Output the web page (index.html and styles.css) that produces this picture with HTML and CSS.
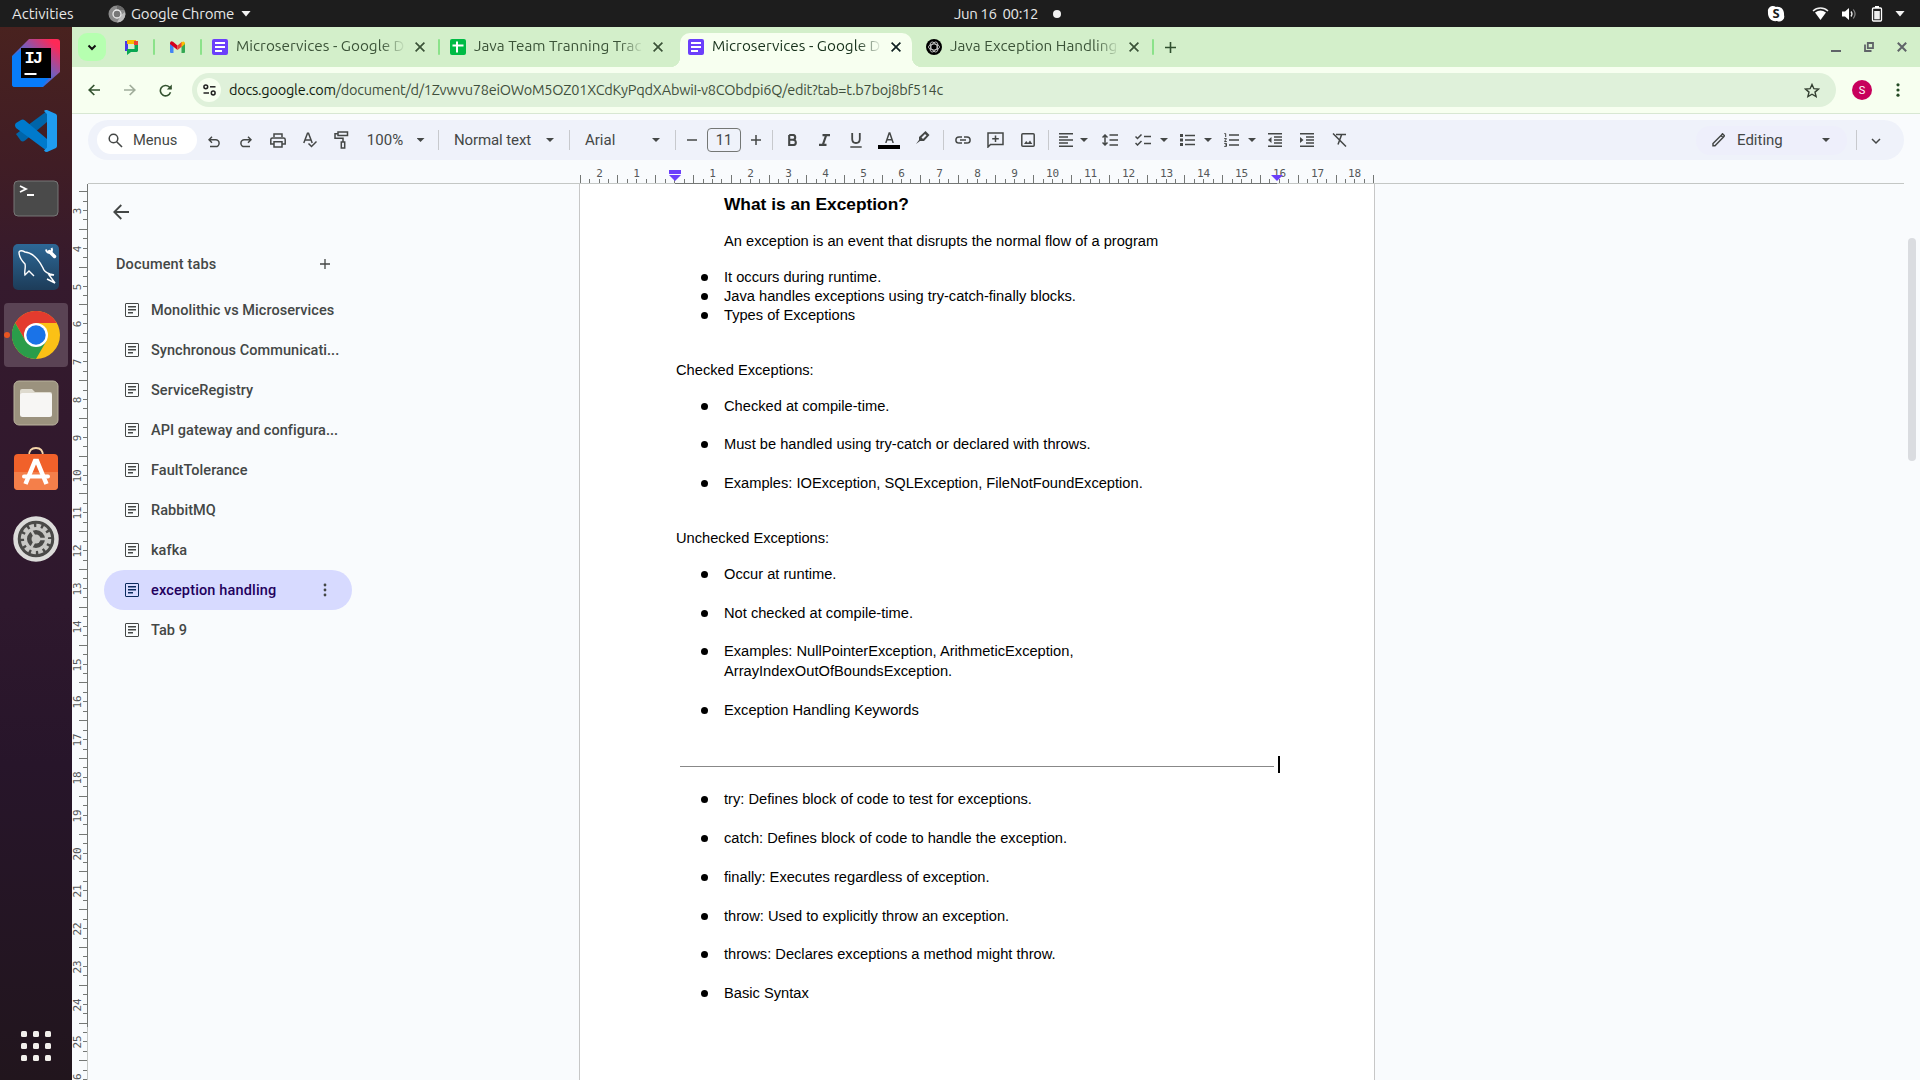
FILE: index.html
```html
<!DOCTYPE html>
<html lang="en">
<head>
<meta charset="utf-8">
<title>Microservices - Google Docs</title>
<link rel="stylesheet" href="styles.css">
</head>
<body>
<header class="panel">
  <span class="activities">Activities</span>
  <svg class="panel-app-icon" width="18" height="18" viewBox="0 0 18 18"><circle cx="9" cy="9" r="8.5" fill="#8b8b8b"/><path d="M9 .5a8.500 8.500 0 0 1 7.500 4.500H9z" fill="#6a6a6a"/><path d="M17 7a8.500 8.500 0 0 1-8 10.500L13 10z" fill="#bcbcbc"/><circle cx="9" cy="9" r="4" fill="#777" stroke="#eee" stroke-width="1.300"/></svg>
  <span class="app-name">Google Chrome</span>
  <i class="caret caret-light"></i>
  <span class="clock">Jun 16&nbsp; 00:12</span>
  <i class="clock-dot"></i>
  <div class="tray">
    <svg width="18" height="18" viewBox="0 0 18 18"><path d="M5 1a5 5 0 0 0-4 6c-.5 5 3 10 9 9a5 5 0 0 0 7-6C17.500 5 14 1 9 2A5 5 0 0 0 5 1z" fill="#fff"/><text x="9" y="13.300" class="skype">S</text></svg>
    <svg class="tray-wifi" width="17" height="15" viewBox="0 0 17 15"><path d="M1 5a11 11 0 0 1 15 0" fill="none" stroke="#eee" stroke-width="1.500"/><path d="M3 6.500a9 9 0 0 1 11 0L8.500 14z" fill="#fff"/></svg>
    <svg class="tray-vol" width="16" height="16" viewBox="0 0 16 16"><path d="M1 5.500h3L8 2v12L4 10.500H1z" fill="#fff"/><path d="M10 5.500q2 2.500 0 5" fill="none" stroke="#eee" stroke-width="1.300"/><path d="M12.300 3.500q3.500 4.500 0 9" fill="none" stroke="#888" stroke-width="1.200"/></svg>
    <svg class="tray-bat" width="12" height="16" viewBox="0 0 12 16"><path d="M4 0h4v2H4z" fill="#fff"/><rect x="1.500" y="2" width="9" height="13" rx="1" fill="none" stroke="#fff" stroke-width="1.300"/><path d="M3.200 5h5.600v8.300H3.200z" fill="#eee"/></svg>
    <i class="caret caret-light"></i>
  </div>
</header>

<div class="desktop">
  <nav class="dock">
    <div class="dock-cell"><svg width="48" height="48" viewBox="0 0 48 48"><defs><linearGradient id="ij" x1="1" y1="0" x2=".3" y2=".75"><stop offset=".15" stop-color="#fe2857"/><stop offset=".6" stop-color="#7b5bb8"/><stop offset="1" stop-color="#087cfa"/></linearGradient></defs><path d="M17 0h28q3 0 3 3v30L31 48H3q-3 0-3-3V17z" fill="url(#ij)"/><path d="M0 18l9-7v28h28l-8 9H3q-3 0-3-3z" fill="#087cfa"/><path d="M9 9h30v30H9z"/><path d="M12.500 35h12" stroke="#fff" stroke-width="2"/><text x="12.500" y="24" class="ij-text">IJ</text></svg></div>
    <div class="dock-cell"><svg width="44" height="44" viewBox="0 0 44 44"><path d="M2 25l5 7q2 1 4-.5L33 13V2z" fill="#0065a9"/><path d="M2 14l5-3q2-1 4 .5L33 30v12L2 19q-2-3 0-5z" fill="#007acc"/><path d="M33 1l9 4q1 1 1 2v30q0 1-1 2l-9 4q-2 0-3-1.500l3-3V5l-3-3q1-1.500 3-1z" fill="#1f9cf0"/></svg></div>
    <div class="dock-cell"><svg width="46" height="38" viewBox="0 0 46 38"><rect x="1" y="1" width="44" height="35" rx="4" fill="#4a4a4a" stroke="#777"/><path d="M7 6l6 3-6 3M14 15h7" fill="none" stroke="#fff" stroke-width="1.800"/></svg></div>
    <div class="dock-cell"><svg width="46" height="46" viewBox="0 0 46 46"><defs><linearGradient id="sql" x2="0" y2="1"><stop stop-color="#2d6896"/><stop offset="1" stop-color="#1d3c59"/></linearGradient></defs><rect width="46" height="46" rx="5" fill="url(#sql)"/><path d="M21 32l-5-5-4 4c-1-4 1-7 0-11C9 17 6 12 6 8c1-2 4-1 6 0 9 1 15 10 18 16 1 4 4 5 7 6l4 1-5 0 6 8-8-4" fill="none" stroke="#fff" stroke-width="1.400"/><path d="M36.500 7.500l5 5" stroke="#fff" stroke-width="3.500" stroke-linecap="round"/><path d="M33 5.500q1 4 4 3 3-1 1.500-4.500" fill="none" stroke="#fff" stroke-width="2"/></svg></div>
    <div class="dock-cell active"><i class="running"></i><svg width="48" height="48" viewBox="0 0 48 48"><circle cx="24" cy="24" r="24" fill="#fbc116"/><path d="M3.200 12A24 24 0 0 1 44.800 12H24L13.600 30z" fill="#e33b2e"/><path d="M3.200 12A24 24 0 0 0 24 48L34.400 30 13.600 30z" fill="#2a9d4a"/><path d="M24 24h20l-9 5z" fill="#fbc116"/><circle cx="24" cy="24" r="12" fill="#fff"/><circle cx="24" cy="24" r="9.700" fill="#1a73e8"/></svg></div>
    <div class="dock-cell"><svg width="46" height="46" viewBox="0 0 46 46"><rect x="1" y="1" width="44" height="44" rx="5" fill="#9b927e" stroke="#bab39e"/><path d="M7 11q0-2 2-2h10l3 3h15q2 0 2 2v4H7z" fill="#dedace"/><rect x="7" y="13" width="32" height="24" rx="2.500" fill="#f7f6f4"/></svg></div>
    <div class="dock-cell dock-store"><svg width="46" height="44" viewBox="0 0 46 44"><path d="M16 9q0-8 7-8t7 8" fill="none" stroke="#f5d5a8" stroke-width="1.800"/><rect x="1" y="7" width="44" height="36" rx="4" fill="#f1612a"/><path d="M1 25h44v14q0 4-4 4H5q-4 0-4-4z" fill="#f47f4a"/><path d="M12.500 37L22 14h2l9.500 23" fill="none" stroke="#fff" stroke-width="4.500"/><path d="M11 29.500h24" stroke="#fff" stroke-width="4" stroke-linecap="round"/></svg></div>
    <div class="dock-cell"><svg width="46" height="46" viewBox="0 0 46 46"><circle cx="23" cy="23" r="20.500" fill="#4a4a48" stroke="#dcdcda" stroke-width="4.500"/><circle cx="23" cy="23" r="13" fill="none" stroke="#c8c8c5" stroke-width="4.500" stroke-dasharray="4.500 2.300"/><circle cx="23" cy="23" r="10.500" fill="#4a4a48" stroke="#c8c8c5" stroke-width="3"/><circle cx="23" cy="23" r="4.500" fill="#c8c8c5"/><path d="M23 23h10M23 23l-5-9M23 23l-5 9" stroke="#c8c8c5" stroke-width="2.500"/></svg></div>
    <div class="dock-apps"><i></i><i></i><i></i><i></i><i></i><i></i><i></i><i></i><i></i></div>
  </nav>

  <main class="browser">
    <div class="tabstrip">
      <button class="tab-search"><svg width="10" height="7" viewBox="0 0 10 7"><path d="M1.500 1.500L5 5l3.500-3.500" fill="none" stroke="#111" stroke-width="2"/></svg></button>
      <div class="pinned"><svg width="14" height="15" viewBox="0 0 14 15"><path d="M1 1h3v10H1z" fill="#4a35e8"/><path d="M3 0h9v4H3z" fill="#f8bd00"/><path d="M10 1h4v4h-4z" fill="#ea4335"/><path d="M10.500 5H14v6l-1 1H7l-4 3V9h7.500z" fill="#09a752"/></svg></div>
      <i class="tab-sep"></i>
      <div class="pinned"><svg width="15" height="12" viewBox="0 0 15 12"><path d="M0 2h3.500v10H1q-1 0-1-1z" fill="#4285f4"/><path d="M11.500 2H15v9q0 1-1 1h-2.500z" fill="#34a853"/><path d="M0 2Q.5-.5 3 .8L7.500 4.500V9L0 3z" fill="#d5001c"/><path d="M7.500 4.500L12 .8v4.700L7.500 9z" fill="#ea4335"/><path d="M11.500 1.200Q15-1 15 3l-3.500 3z" fill="#fbbc04"/></svg></div>
      <i class="tab-sep"></i>
      <div class="tab"><svg width="16" height="16" viewBox="0 0 16 16"><rect width="16" height="16" rx="2" fill="#6b3ffb"/><path d="M3 4h10M3 8h10M3 12h7" stroke="#fff" stroke-width="1.800"/></svg><span class="tab-title">Microservices - Google D</span><b class="x"></b></div>
      <i class="tab-sep"></i>
      <div class="tab"><svg width="16" height="16" viewBox="0 0 16 16"><rect width="16" height="16" rx="2" fill="#00bb45"/><path d="M2.500 6.500h11M7 2.500v11" stroke="#fff" stroke-width="2"/></svg><span class="tab-title">Java Team Tranning Trac</span><b class="x"></b></div>
      <div class="tab tab-active"><svg width="16" height="16" viewBox="0 0 16 16"><rect width="16" height="16" rx="2" fill="#6b3ffb"/><path d="M3 4h10M3 8h10M3 12h7" stroke="#fff" stroke-width="1.800"/></svg><span class="tab-title">Microservices - Google D</span><b class="x"></b></div>
      <div class="tab"><svg width="16" height="16" viewBox="0 0 16 16"><circle cx="8" cy="8" r="8"/><g fill="none" stroke="#ddd" stroke-width=".8"><ellipse cx="8" cy="8" rx="5.500" ry="3"/><ellipse cx="8" cy="8" rx="5.500" ry="3" transform="rotate(60 8 8)"/><ellipse cx="8" cy="8" rx="5.500" ry="3" transform="rotate(120 8 8)"/></g></svg><span class="tab-title">Java Exception Handling</span><b class="x"></b></div>
      <i class="tab-sep"></i>
      <svg class="new-tab" width="11" height="11" viewBox="0 0 11 11"><path d="M0 5.500h11M5.500 0v11" stroke="#30502f" stroke-width="1.600"/></svg>
      <div class="win">
        <svg width="10" height="12" viewBox="0 0 10 12"><path d="M0 10h10" stroke="#5f6368" stroke-width="2"/></svg>
        <svg width="10" height="10" viewBox="0 0 10 10"><path d="M3.800 1h5.200v5.200H3.800zM1 2.500V9h6.500" fill="none" stroke="#5f6368" stroke-width="1.800"/></svg>
        <svg width="10" height="10" viewBox="0 0 10 10"><path d="M.8.8l8.400 8.400M9.200.8L.8 9.200" stroke="#5f6368" stroke-width="2"/></svg>
      </div>
    </div>

    <div class="navbar">
      <svg class="nav-back" width="12" height="12" viewBox="0 0 12 12"><path d="M12 6H1.500M6.300 1L1.200 6l5.100 5" fill="none" stroke="#33522f" stroke-width="1.700"/></svg>
      <svg class="nav-fwd" width="12" height="12" viewBox="0 0 12 12"><path d="M0 6h10.500M5.700 1l5.100 5-5.100 5" fill="none" stroke="#a0ad9b" stroke-width="1.700"/></svg>
      <svg class="nav-reload" width="13" height="13" viewBox="0 0 13 13"><path d="M11.500 8.300A5.200 5.200 0 1 1 10.300 3L12 4.800" fill="none" stroke="#33522f" stroke-width="1.600"/><path d="M12.800.5v5H7.800z" fill="#33522f"/></svg>
      <div class="omnibox">
        <span class="site-info"><svg width="13" height="12" viewBox="0 0 13 12"><g fill="none" stroke="#222" stroke-width="1.500"><circle cx="2.800" cy="2.800" r="1.900"/><path d="M7 2.800h5.500"/><circle cx="10.200" cy="9" r="1.900"/><path d="M.5 9H6"/></g></svg></span>
        <span class="url"><b>docs.google.com</b>/document/d/1Zvwvu78eiOWoM5OZ01XCdKyPqdXAbwiI-v8CObdpi6Q/edit?tab=t.b7boj8bf514c</span>
        <svg class="star" width="16" height="15" viewBox="0 0 16 15"><path d="M8 1.500l1.900 4.200 4.600.4-3.500 3 1.100 4.400L8 11.200l-4.100 2.300L5 9.100l-3.500-3 4.600-.4z" fill="none" stroke="#333f31" stroke-width="1.400"/></svg>
      </div>
      <span class="avatar">S</span>
      <svg class="kebab" width="4" height="14" viewBox="0 0 4 14"><g fill="#244a24"><circle cx="2" cy="1.800" r="1.600"/><circle cx="2" cy="7" r="1.600"/><circle cx="2" cy="12.200" r="1.600"/></g></svg>
    </div>

    <div class="docbar">
      <div class="menus"><svg width="15" height="15" viewBox="0 0 15 15"><circle cx="5.500" cy="5.500" r="4.300" fill="none" stroke="#444746" stroke-width="1.500"/><path d="M8.700 8.700l5.300 5.300" stroke="#444746" stroke-width="1.600"/></svg><span>Menus</span></div>
      <div class="tools">
        <svg class="low" width="12" height="12" viewBox="0 0 12 12"><path d="M4 .8L1 3.800l3 3M1.200 3.800h6.500a3.200 3.200 0 0 1 0 6.800H2" class="ln"/></svg>
        <svg class="low" width="12" height="12" viewBox="0 0 12 12"><path d="M8 .8l3 3-3 3M10.800 3.800H4.300a3.200 3.200 0 0 0 0 6.800H10" class="ln"/></svg>
        <svg width="16" height="15" viewBox="0 0 16 15"><path d="M4 4V1h8v3M4 11H.8V6.500Q.8 5 2.500 5h11q1.700 0 1.700 1.500V11H12M4 8.700h8V14H4z" class="ln"/></svg>
        <svg width="14" height="16" viewBox="0 0 14 16"><path d="M.8 11L4.500 1.200h1L9.200 11M2 8h6M5.500 11.500l3 3 5-5" class="ln"/></svg>
        <svg width="15" height="18" viewBox="0 0 15 18"><path d="M4 1h9.500v3.500H4zM4 2.700H1v4.500h8v3.500M7.300 11h3.400v6H7.300z" class="ln"/></svg>
        <span class="t-zoom">100%</span><i class="caret"></i><i class="sep"></i>
        <span class="t-style">Normal text</span><i class="caret"></i><i class="sep"></i>
        <span class="t-font">Arial</span><i class="caret"></i><i class="sep"></i>
        <svg width="10" height="10" viewBox="0 0 10 10"><path d="M0 5h10" class="ln"/></svg>
        <span class="size">11</span>
        <svg width="10" height="10" viewBox="0 0 10 10"><path d="M0 5h10M5 0v10" class="ln"/></svg>
        <i class="sep"></i>
        <svg width="9" height="12" viewBox="0 0 9 12"><path d="M1.200 1h3.500q2.500 0 2.500 2.400T4.700 5.800H1.200V1v10h4q2.600 0 2.600-2.600T5 5.800" class="hv"/></svg>
        <svg width="11" height="12" viewBox="0 0 11 12"><path d="M3.500 1.100H11M0 10.900h7.500M7.200 1.100L3.800 10.900" class="hv"/></svg>
        <svg width="12" height="15" viewBox="0 0 12 15"><path d="M2.200 0v6q0 4 3.800 4t3.800-4V0" class="hv thin"/><path d="M.3 14h11.400" class="ln"/></svg>
        <span class="txtcolor"><svg width="9" height="11" viewBox="0 0 9 11"><path d="M.8 11L4.200 1h.6L8.200 11M2 7.700h5" class="ln"/></svg></span>
        <svg class="pen" width="14" height="13" viewBox="0 0 14 13"><path d="M9.500 0l4 4-5.500 6H4L0 13l3-4V6z" fill="#444746"/><path d="M5.500 6.500L9 3l1.500 1.500L7 8z" fill="#eff2fa"/></svg>
        <i class="sep"></i>
        <svg width="16" height="8" viewBox="0 0 16 8"><path d="M7 .9H4a3.100 3.100 0 0 0 0 6.200h3M9 .9h3a3.100 3.100 0 0 1 0 6.200H9M5 4h6" class="ln"/></svg>
        <svg width="17" height="16" viewBox="0 0 17 16"><path d="M1 15V1h15v11.500H3.500zM8.500 3.500v6.500M5.200 6.800h6.600" class="ln"/></svg>
        <svg width="14" height="14" viewBox="0 0 14 14"><rect x=".8" y=".8" width="12.400" height="12.400" rx="1" class="ln"/><path d="M3 11l2.200-3 1.800 2L9 7.500 11.300 11z" fill="#444746"/></svg>
        <i class="sep"></i>
        <svg width="14" height="14" viewBox="0 0 14 14"><path d="M0 .8h14M0 3.900h9M0 7h14M0 10.100h9M0 13.200h14" class="ln"/></svg>
        <i class="caret"></i>
        <svg width="16" height="12" viewBox="0 0 16 12"><path d="M3 1v10M.5 3.500L3 1l2.500 2.500M.5 8.500L3 11l2.500-2.500M7.500 1H16M7.500 6H16M7.500 11H16" class="ln"/></svg>
        <svg width="16" height="12" viewBox="0 0 16 12"><path d="M.5 2.500l2 2L6.500.5M.5 9l2 2L6.500 7M9 2.500h7M9 9.500h7" class="ln"/></svg>
        <i class="caret"></i>
        <svg width="15" height="12" viewBox="0 0 15 12"><path d="M0 1.500h3M0 6h3M0 10.500h3" stroke="#444746" stroke-width="2.800"/><path d="M5 1.500h10M5 6h10M5 10.500h10" class="ln"/></svg>
        <i class="caret"></i>
        <svg width="15" height="14" viewBox="0 0 15 14"><path d="M5 2h10M5 7h10M5 12h10" class="ln"/><path d="M.3.600h1.400V4M.2 5.600h2.300L.5 8.500h2.300M.2 10.400h2.300v3H.2M1 11.900h1.500" fill="none" stroke="#444746"/></svg>
        <i class="caret"></i>
        <svg width="14" height="14" viewBox="0 0 14 14"><path d="M0 .8h14M6 3.900h8M6 7h8M6 10.100h8M0 13.200h14" class="ln"/><path d="M3.500 4v6L0 7z" fill="#444746"/></svg>
        <svg width="14" height="14" viewBox="0 0 14 14"><path d="M0 .8h14M6 3.900h8M6 7h8M6 10.100h8M0 13.200h14" class="ln"/><path d="M0 4v6l3.500-3z" fill="#444746"/></svg>
        <svg width="15" height="14" viewBox="0 0 15 14"><path d="M4 1.500h10M9.500 2L6 11.500M1 .5l13 13" class="ln"/></svg>
      </div>
      <div class="mode"><svg width="13" height="14" viewBox="0 0 13 14"><path d="M1 10.500L9 2.500l2 2-8 8.300H1zM9.500 2l1-1.200 2 2L11.500 4" class="ln"/></svg><span>Editing</span><i class="caret"></i></div>
      <i class="sep"></i>
      <svg class="chev" width="10" height="7" viewBox="0 0 10 7"><path d="M1 1l4 4 4-4" class="ln"/></svg>
    </div>

    <svg class="hruler" id="hruler" width="1848" height="24"></svg>

    <div class="workspace">
      <svg class="vruler" id="vruler" width="16" height="896"></svg>
      <aside class="outline">
        <svg class="back" width="16" height="16" viewBox="0 0 16 16"><path d="M16 8H1.500M8.300 1L1.300 8l7 7" fill="none" stroke="#444746" stroke-width="1.800"/></svg>
        <div class="outline-head"><span>Document tabs</span><svg width="10" height="10" viewBox="0 0 10 10"><path d="M0 5h10M5 0v10" stroke="#444746" stroke-width="1.300"/></svg></div>
        <ul class="doc-tabs">
          <li><i class="di"></i><span>Monolithic vs Microservices</span></li>
          <li><i class="di"></i><span>Synchronous Communicati...</span></li>
          <li><i class="di"></i><span>ServiceRegistry</span></li>
          <li><i class="di"></i><span>API gateway and configura...</span></li>
          <li><i class="di"></i><span>FaultTolerance</span></li>
          <li><i class="di"></i><span>RabbitMQ</span></li>
          <li><i class="di"></i><span>kafka</span></li>
          <li class="selected"><i class="di"></i><span>exception handling</span><svg width="4" height="14" viewBox="0 0 4 14"><g fill="#444746"><circle cx="2" cy="2" r="1.400"/><circle cx="2" cy="7" r="1.400"/><circle cx="2" cy="12" r="1.400"/></g></svg></li>
          <li><i class="di"></i><span>Tab 9</span></li>
        </ul>
      </aside>
      <article class="sheet">
        <h1>What is an Exception?</h1>
        <p class="indented">An exception is an event that disrupts the normal flow of a program</p>
        <ul class="tight"><li>It occurs during runtime.</li><li>Java handles exceptions using try-catch-finally blocks.</li><li>Types of Exceptions</li></ul>
        <p class="section">Checked Exceptions:</p>
        <ul><li>Checked at compile-time.</li><li>Must be handled using try-catch or declared with throws.</li><li>Examples: IOException, SQLException, FileNotFoundException.</li></ul>
        <p class="section">Unchecked Exceptions:</p>
        <ul><li>Occur at runtime.</li><li>Not checked at compile-time.</li><li>Examples: NullPointerException, ArithmeticException,<br>ArrayIndexOutOfBoundsException.</li><li>Exception Handling Keywords</li></ul>
        <div class="rule"><hr><i class="cursor"></i></div>
        <ul><li>try: Defines block of code to test for exceptions.</li><li>catch: Defines block of code to handle the exception.</li><li>finally: Executes regardless of exception.</li><li>throw: Used to explicitly throw an exception.</li><li>throws: Declares exceptions a method might throw.</li><li>Basic Syntax</li></ul>
      </article>
      <div class="gutter"><i class="thumb"></i></div>
    </div>
  </main>
</div>
<script src="rulers.js"></script>
</body>
</html>
```
FILE: styles.css
```css
* { box-sizing: border-box; }
body { margin: 0; width: 1920px; height: 1080px; overflow: hidden; display: flex; flex-direction: column; font-family: Roboto, sans-serif; color: #444746; }
svg { display: block; flex: none; }
ul, p, h1 { margin: 0; padding: 0; list-style: none; }
.caret { flex: none; width: 8px; height: 4px; background: #444746; clip-path: polygon(0 0, 100% 0, 50% 100%); }
.caret-light { width: 10px; height: 6px; background: #f2f2f2; }
.ln { fill: none; stroke: #444746; stroke-width: 1.5; }
.hv { fill: none; stroke: #444746; stroke-width: 2.1; }
.thin { stroke-width: 1.8; }

.panel { height: 27px; flex: none; background: #1d1d1d; color: #e8e8e8; font: 15px "Ubuntu", "Noto Sans", sans-serif; display: flex; align-items: center; white-space: nowrap; }
.activities { width: 97px; padding-left: 12px; }
.panel-app-icon { margin-left: 11px; }
.app-name { width: 104px; margin: 0 6px 0 5px; letter-spacing: -.15px; }
.clock { width: 86px; margin-left: 703px; letter-spacing: -.4px; }
.clock-dot { width: 8px; height: 8px; margin-left: 13px; border-radius: 50%; background: #f2f2f2; }
.tray { margin-left: auto; margin-right: 15px; display: flex; align-items: center; }
.tray-wifi { margin-left: 27px; }
.tray-vol { margin-left: 12px; }
.tray-bat { margin: 0 12px 0 14px; }
.skype { font: bold 13px "Open Sans", sans-serif; text-anchor: middle; fill: #1d1d1d; }

.desktop { flex: 1; display: flex; min-height: 0; }
.dock { width: 72px; flex: none; display: flex; flex-direction: column; align-items: center; gap: 4px; padding-top: 4px; background: linear-gradient(#49221f 0, #401d25 13%, #351a2d 24%, #2e182d 55%, #27152a 70%, #21151d 100%); }
.dock-cell { width: 64px; height: 64px; flex: none; display: flex; align-items: center; justify-content: center; border-radius: 4px; position: relative; }
.dock-cell.active { background: #5a4354; }
.dock-store { padding-bottom: 5px; }
.running { position: absolute; left: 0; top: 29px; width: 6px; height: 6px; border-radius: 50%; background: #e95420; }
.ij-text { font: bold 17px "Liberation Mono", monospace; fill: #fff; letter-spacing: -2px; }
.dock-apps { margin: auto 0 19px; display: grid; grid-template-columns: repeat(3, 6px); gap: 6px; }
.dock-apps i { height: 6px; border-radius: 1.5px; background: #f2f0ec; }

.browser { flex: 1; min-width: 0; display: flex; flex-direction: column; background: #f9fbfd; }
.tabstrip { height: 40px; flex: none; background: #d3efca; display: flex; align-items: center; padding-left: 6px; font: 15.3px/24px "Ubuntu", "Noto Sans", sans-serif; color: #3b5338; }
.tab-search { width: 28px; height: 28px; padding: 0; border: 0; border-radius: 9px; background: #b6ffb0; display: grid; place-items: center; margin-right: 2px; }
.pinned { width: 45px; display: grid; place-items: center; }
.tab-sep { width: 2px; height: 16px; flex: none; background: #8be28a; border-radius: 1px; }
.tab { flex: none; width: 236px; display: flex; align-items: center; padding-left: 10px; }
.tab-title { width: 168px; height: 26px; margin-left: 8px; white-space: nowrap; mask-image: linear-gradient(90deg, #000 145px, transparent 170px); }
.x { width: 10px; height: 10px; margin-left: 11px; clip-path: polygon(0 12%, 12% 0, 50% 38%, 88% 0, 100% 12%, 62% 50%, 100% 88%, 88% 100%, 50% 62%, 12% 100%, 0 88%, 38% 50%); background: #3b5338; }
.tab-active { width: 232px; height: 34px; margin-top: 6px; margin-left: 4px; padding: 0 0 6px 8px; border-radius: 10px 10px 0 0; background: #f7fff0; color: #16301a; position: relative; }
.tab-active .x { background: #122; }
.tab-active::before, .tab-active::after { content: ""; position: absolute; bottom: 0; width: 10px; height: 10px; }
.tab-active::before { left: -10px; background: radial-gradient(circle at 0 0, transparent 10px, #f7fff0 10.5px); }
.tab-active::after { right: -10px; background: radial-gradient(circle at 100% 0, transparent 10px, #f7fff0 10.5px); }
.tab-active + .tab { width: 240px; padding-left: 14px; }
.new-tab { margin-left: 11px; }
.win { margin-left: auto; margin-right: 13px; display: flex; align-items: center; gap: 23px; }

.navbar { height: 47px; flex: none; background: #f7fff0; border-bottom: 1px solid #d8e7d3; display: flex; align-items: center; }
.nav-back { margin-left: 16px; }
.nav-fwd { margin-left: 24px; }
.nav-reload { margin-left: 23px; }
.omnibox { width: 1644px; height: 34px; margin-left: 20px; border-radius: 17px; background: #dff1da; display: flex; align-items: center; padding: 0 16px 0 5px; }
.site-info { width: 24px; height: 24px; border-radius: 50%; background: #f7fff0; display: grid; place-items: center; }
.url { margin: 0 0 2px 8px; font: 14.5px "Ubuntu", "Noto Sans", sans-serif; color: #3f4f3c; white-space: nowrap; letter-spacing: -.23px; }
.url b { font-weight: 400; color: #10200f; }
.star { margin-left: auto; }
.avatar { width: 20px; height: 20px; margin-left: 16px; border-radius: 50%; background: #c7005c; color: #fff; font-size: 11px; display: grid; place-items: center; }
.kebab { margin-left: 24px; }

.docbar { width: 1816px; height: 40px; flex: none; margin: 6px 0 0 16px; border-radius: 20px; background: #eff2fa; display: flex; align-items: center; font-size: 15px; }
.menus { width: 100px; height: 28px; margin: 0 1px 0 9px; border-radius: 14px; background: #fff; display: flex; align-items: center; gap: 10px; padding-left: 11px; font-size: 14.7px; }
.tools { display: grid; align-items: center; justify-items: center; white-space: nowrap;
  grid-template-columns: 32px 32px 32px 32px 31px 56px 15px 20px 89px 26px 12px 71px 20px 18px 16px 48px 16px 16px 24px 40px 24px 42px 26px 14px 26px 38px 28px 12px 24px 12px 40px 26px 16px 30px 12px 34px 8px 38px 26px 38px; }
.low { margin-top: 4px; }
.sep { flex: none; width: 1px; height: 20px; background: #c7c9cd; }
.t-style { letter-spacing: -.1px; }
.t-font { justify-self: start; margin-left: 10px; }
.size { width: 34px; height: 24px; border: 1px solid #747775; border-radius: 4px; display: grid; place-items: center; font-size: 14.5px; }
.txtcolor { width: 22px; height: 17px; border-bottom: 4px solid #000; display: flex; justify-content: center; }
.pen { margin-bottom: 6px; }
.mode { width: 151px; height: 29px; margin: 0 9px 0 auto; padding: 0 17px 0 16px; border-radius: 14px; background: #eeeffb; display: flex; align-items: center; gap: 12px; }
.mode .caret { margin-left: auto; }
.chev { margin: 2px 23px 0 14px; }

.workspace { flex: 1; min-height: 0; display: flex; }
.outline { width: 491px; flex: none; padding: 20px 227px 0 16px; }
.back { margin-left: 9px; }
.outline-head { height: 40px; margin: 24px 0 6px; padding: 0 22px 0 12px; display: flex; align-items: center; justify-content: space-between; font-size: 14.5px; font-weight: 500; letter-spacing: .15px; }
.doc-tabs { font-size: 14.5px; font-weight: 500; letter-spacing: .05px; }
.doc-tabs li { height: 40px; display: flex; align-items: center; gap: 12px; padding: 0 25px 0 21px; border-radius: 20px; white-space: nowrap; }
.doc-tabs svg { margin-left: auto; }
.doc-tabs .selected { background: #d7daff; color: #22005d; letter-spacing: .15px; }
.di { width: 14px; height: 14px; flex: none; border: 1.5px solid currentColor; border-radius: 1px; background: linear-gradient(currentColor, currentColor) 2px 2px / 8px 1.5px no-repeat, linear-gradient(currentColor, currentColor) 2px 5px / 8px 1.5px no-repeat, linear-gradient(currentColor, currentColor) 2px 8px / 5px 1.5px no-repeat; }
.selected .di { color: #0b2a5c; }

.sheet { width: 796px; flex: none; padding: 10px 0 0 96px; border: solid #c7c7c7; border-width: 0 1px; background: #fff; color: #000; font: 14.667px/19.4px "Liberation Sans", Arial, sans-serif; white-space: nowrap; }
.sheet h1 { font-size: 17.333px; line-height: 20px; margin-left: 48px; }
.sheet .indented { margin: 18px 0 16.5px 48px; }
.sheet li { margin: 0 0 19.4px 48px; position: relative; }
.sheet .tight li { margin-bottom: 0; line-height: 19.2px; }
.sheet li::before { content: ""; position: absolute; left: -23px; top: 6px; width: 7px; height: 7px; border-radius: 50%; background: #000; }
.sheet .section { margin: 35.7px 0 16px; }
.rule { height: 51px; padding-top: 17px; display: flex; }
.rule hr { width: 594px; height: 1px; margin: 10px 0 0 4px; border: 0; background: #888; }
.cursor { width: 2px; height: 17px; margin-left: 4px; background: #000; }

.gutter { flex: 1; padding: 54px 4px 0 0; }
.thumb { display: block; width: 8px; height: 223px; margin-left: auto; border-radius: 4px; background: #dadce0; }

.tick { stroke: #747775; stroke-width: 1; shape-rendering: crispEdges; }
.faint { stroke: #c4c7c5; stroke-width: 1; shape-rendering: crispEdges; }
.num { font: 11px "DejaVu Sans Mono", monospace; fill: #55585a; text-anchor: middle; letter-spacing: -.2px; }
.marker { fill: #6b3ffb; }
```
FILE: rulers.js
```js
const QUARTER_CM = 37.795 / 4;

function add(svg, tag, attrs, text) {
  const el = document.createElementNS("http://www.w3.org/2000/svg", tag);
  for (const key in attrs) el.setAttribute(key, attrs[key]);
  if (text !== undefined) el.textContent = text;
  svg.appendChild(el);
}
function line(svg, cls, x1, y1, x2, y2) {
  add(svg, "line", { class: cls, x1, y1, x2, y2 });
}

// Horizontal ruler: the page starts at 508px, zero is ten quarter marks in.
const h = document.getElementById("hruler");
line(h, "faint", 16, 23.5, 1832, 23.5);
line(h, "tick", 603, 23.5, 1205, 23.5);
for (let i = 0; i <= 84; i++) {
  const x = Math.floor(508.2 + i * QUARTER_CM) + 0.5;
  line(h, "tick", x, i % 4 === 0 ? 15 : 19, x, 23);
  if (i % 4 === 2 && i !== 10) {
    add(h, "text", { class: "num", x, y: 17 }, Math.abs((i - 10) / 4));
  }
}
add(h, "path", { class: "marker", d: "M597 10h12v4h-12z M597 15h12l-6 6z" });
add(h, "path", { class: "marker", d: "M1199 15h12l-6 6z" });

// Vertical ruler, from the 2.5 mark downwards.
const v = document.getElementById("vruler");
line(v, "tick", 15.5, 0, 15.5, 843);
line(v, "faint", 15.5, 843, 15.5, 896);
for (let i = 0; i < 95; i++) {
  const y = Math.floor(7.6 + i * QUARTER_CM) + 0.5;
  line(v, "tick", i % 4 === 0 ? 7 : 11, y, 15, y);
  if (i % 4 === 2) {
    add(v, "text", { class: "num", transform: `translate(8.500 ${y + 0.5}) rotate(-90)` }, 3 + (i - 2) / 4);
  }
}
```
